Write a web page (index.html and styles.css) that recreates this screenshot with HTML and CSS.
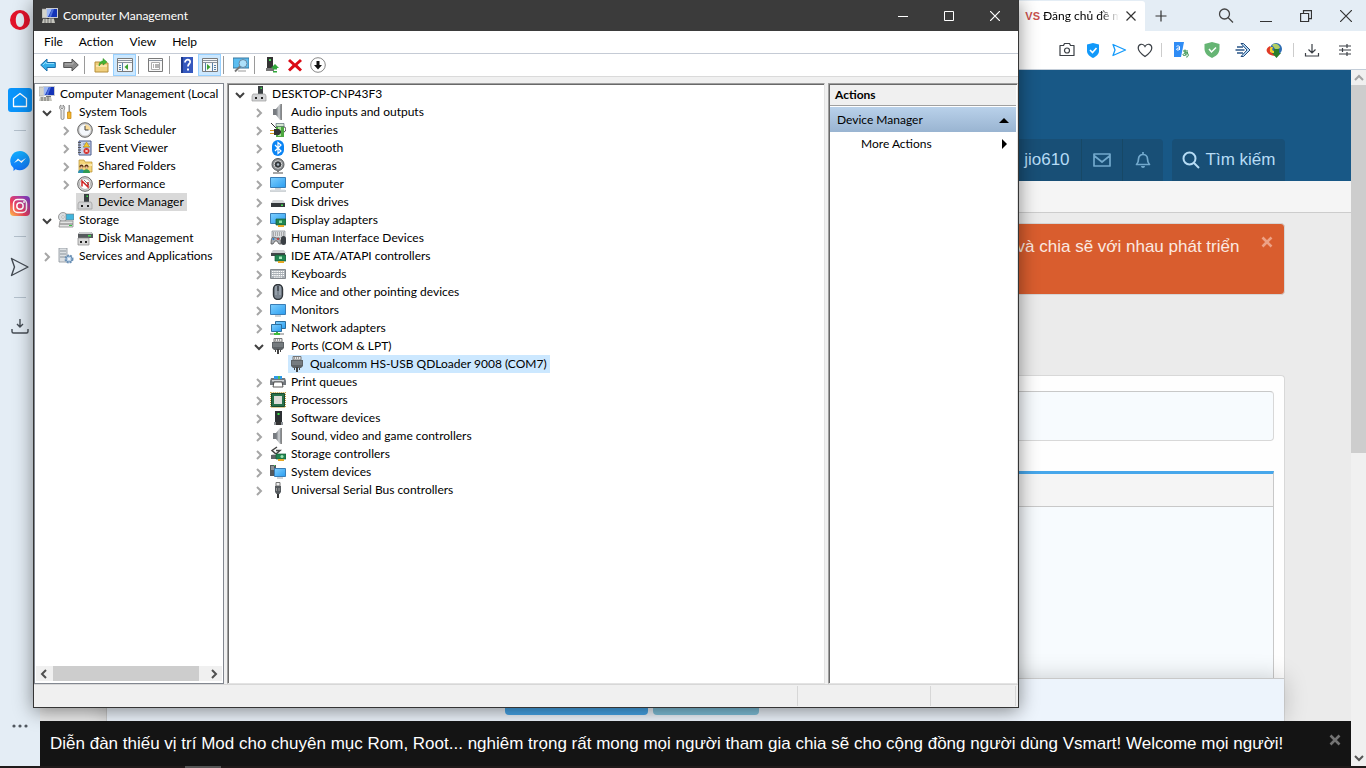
FILE: index.html
```html
<!DOCTYPE html>
<html lang="vi">
<head>
<meta charset="utf-8">
<title>Computer Management</title>
<link rel="stylesheet" href="styles.css">
</head>
<body>
<svg class="defs" aria-hidden="true">
  <defs>
    <linearGradient id="g-screen" x1="0" y1="0" x2="1" y2="1"><stop offset="0" stop-color="#7fd0ff"/><stop offset="1" stop-color="#2a9df0"/></linearGradient>
    <linearGradient id="g-metal" x1="0" y1="0" x2="1" y2="0"><stop offset="0" stop-color="#70757a"/><stop offset=".5" stop-color="#d0d3d6"/><stop offset="1" stop-color="#777"/></linearGradient>
    <linearGradient id="g-insta" x1="0" y1="1" x2="1" y2="0"><stop offset="0" stop-color="#fdc24c"/><stop offset=".4" stop-color="#ee3e5c"/><stop offset="1" stop-color="#7b3fe0"/></linearGradient>
    <linearGradient id="g-msg" x1="0" y1="0" x2="0" y2="1"><stop offset="0" stop-color="#12b0ff"/><stop offset="1" stop-color="#1272fa"/></linearGradient>
  </defs>
  <symbol id="chev-down" viewBox="0 0 10 10"><path d="M1 3l4 4 4-4" fill="none" stroke="#404040" stroke-width="2"/></symbol>
  <symbol id="chev-right" viewBox="0 0 10 10"><path d="M3 1l4 4-4 4" fill="none" stroke="#a6a6a6" stroke-width="2"/></symbol>
  <symbol id="i-mgmt" viewBox="0 0 16 16"><path d="M0 1h5v9H0z" fill="#d4d4cc" stroke="#999" stroke-width=".6"/><path d="M4 0h12v10H4z" fill="#c9ccd2"/><path d="M5 1h10v8H5z" fill="#1434b8"/><path d="M5 1h5L6 9H5z" fill="#9db8f4"/><path d="M10 1h2L9 9H7z" fill="#4e70dc"/><path d="M7 10h5v1H7z" fill="#777"/><path d="M1 11h11l1 4H0z" fill="#c5c5bd"/><path d="M2 12h9M2 14h9" stroke="#6f6f6f" stroke-dasharray="2 1"/></symbol>
  <symbol id="i-tools" viewBox="0 0 16 16"><path d="M3 1v3l1 1 1-1V1c2 1 2 4 1 5v8a1.500 1.500 0 01-3 0V6C1 5 1 2 3 1z" fill="#e8e8e8" stroke="#777" stroke-width=".8"/><path d="M10.500 1h1.500v7h-1.500z" fill="#999"/><path d="M9.500 8h3.500v6.500h-3.500z" fill="#f3b62c" stroke="#c27e0a" stroke-width=".7"/></symbol>
  <symbol id="i-clock" viewBox="0 0 16 16"><circle cx="8" cy="8" r="7.300" fill="#c9c9c9" stroke="#666"/><circle cx="8" cy="8" r="5.600" fill="#f5f8fc"/><path d="M8 2.400A5.600 5.600 0 0113.600 8H8z" fill="#f9dc9b"/><path d="M8 4v4h3.500" fill="none" stroke="#444"/></symbol>
  <symbol id="i-event" viewBox="0 0 16 16"><path d="M2 1h12v14H2z" fill="#c8d4ec" stroke="#4a5a8c"/><path d="M1 2.500h3M1 5h3M1 7.500h3M1 10h3M1 12.500h3" stroke="#555"/><path d="M6 4h7M6 7h7" stroke="#7487b8"/><path d="M9.500 2l3 5h-6z" fill="#f5c830" stroke="#a88000" stroke-width=".5"/><circle cx="9.500" cy="11" r="3" fill="#d5302c"/><path d="M8.300 9.800l2.400 2.400m0-2.400l-2.400 2.400" stroke="#fff"/></symbol>
  <symbol id="i-shared" viewBox="0 0 16 16"><path d="M2 2h5l1 2h7v10H2z" fill="#f4d57a" stroke="#b88f2c" stroke-width=".7"/><path d="M3 6h12v2H3z" fill="#fae7a8"/><circle cx="4.500" cy="8.500" r="2" fill="#5a3318"/><circle cx="9.500" cy="8.500" r="2" fill="#5a3318"/><circle cx="4.500" cy="9.500" r="1.200" fill="#f1c09b"/><circle cx="9.500" cy="9.500" r="1.200" fill="#f1c09b"/><path d="M1 15c0-5 7-5 7 0z" fill="#2d8fae"/><path d="M6 15c0-5 7-5 7 0z" fill="#2f9b50"/></symbol>
  <symbol id="i-perf" viewBox="0 0 16 16"><circle cx="8" cy="8" r="7.300" fill="#ddd" stroke="#666"/><circle cx="8" cy="8" r="5.400" fill="#fff" stroke="#8a8a8a" stroke-width=".6"/><path d="M5 10.500V5l6 6V6" fill="none" stroke="#d02222" stroke-width="1.500"/><path d="M7 4l5 5" stroke="#444" stroke-width=".7"/></symbol>
  <symbol id="i-device" viewBox="0 0 16 16"><path d="M7 0h5v8H7z" fill="#3a3f42"/><path d="M9.500 1.500h1.500V3H9.500z" fill="#3fe04a"/><path d="M2 8h12l1 2v5H1v-5z" fill="#d2d3d5" stroke="#9b9b9b" stroke-width=".7"/><path d="M4 11h2v2H4zM10 11h2v2h-2z" fill="#222"/></symbol>
  <symbol id="i-storage" viewBox="0 0 16 16"><circle cx="5" cy="5" r="4.500" fill="#d9dde0" stroke="#777" stroke-width=".7"/><circle cx="5" cy="5" r="1.300" fill="#fff" stroke="#888" stroke-width=".5"/><path d="M8 2h8v6H8z" fill="#42b5dd" stroke="#777" stroke-width=".6"/><path d="M2 9h13v6H1z" fill="#e3e3e3" stroke="#888" stroke-width=".8"/><path d="M2 12h13" stroke="#777"/><path d="M11 13h3v1h-3z" fill="#35c744"/></symbol>
  <symbol id="i-disk" viewBox="0 0 16 16"><path d="M3 2h11l2 2v4H1V4z" fill="#565a5d"/><path d="M3 2h11l2 2H1z" fill="#cacccd"/><path d="M11 5h3v1.500h-3z" fill="#45dd52"/><path d="M1 8h11v7H1z" fill="#d8d8d8" stroke="#888" stroke-width=".7"/><path d="M3 11h2v2H3zM8 11h2v2H8z" fill="#222"/></symbol>
  <symbol id="i-services" viewBox="0 0 16 16"><path d="M1 0h8v14H1z" fill="#dce0e3" stroke="#8a9299" stroke-width=".8"/><path d="M2 3h6M2 6h6M2 9h6" stroke="#8b949b"/><circle cx="11" cy="11" r="3.300" fill="#c8dcee" stroke="#6b90b5" stroke-width="2.400" stroke-dasharray="1.700 1"/><circle cx="11" cy="11" r="3" fill="#bcd4ea" stroke="#6b90b5"/><circle cx="11" cy="11" r="1" fill="#fff"/></symbol>
  <symbol id="i-speaker" viewBox="0 0 16 16"><path d="M3 5h3v6H3z" fill="#777b80"/><path d="M6 5l4-5h2v16h-2l-4-5z" fill="url(#g-metal)"/><path d="M10.500 1.500v13" stroke="#8d9297"/></symbol>
  <symbol id="i-battery" viewBox="0 0 16 16"><path d="M6 2h8v13H6z" fill="#4ca73f"/><path d="M6 1.500h8v3H6z" fill="#d3e8d0" stroke="#456" stroke-width=".6"/><path d="M8 5h3v9H8z" fill="#a9e69a"/><path d="M14 5c2.500 0 2.500 4 0 5M1 1l3 3 2 2" fill="none" stroke="#333"/><path d="M4 7h5l2 2v2l-2 2H4z" fill="#333"/><path d="M0 8.500h4M0 11.500h4" stroke="#d99a1c"/></symbol>
  <symbol id="i-bt" viewBox="0 0 16 16"><rect x="2" y="0" width="12" height="16" rx="6" fill="#0a84f4"/><path d="M5 5l6 6-3 2.500v-11L11 5l-6 6" fill="none" stroke="#fff" stroke-width="1.200"/></symbol>
  <symbol id="i-camera" viewBox="0 0 16 16"><circle cx="8" cy="6.500" r="6" fill="#8d9194" stroke="#55585b"/><circle cx="8" cy="6.500" r="3.800" fill="#33373a" stroke="#d7d7d7"/><circle cx="8" cy="6.500" r="1.300" fill="#a9b8c4"/><path d="M7 12h2v2H7z" fill="#777"/><path d="M3 15h10" stroke="#888" stroke-width="1.500"/></symbol>
  <symbol id="i-computer" viewBox="0 0 16 16"><path d="M.5 1.500h15v10H.5z" fill="url(#g-screen)" stroke="#3a7db5"/><path d="M5 13h6M0 15h16" stroke="#a0a9b0"/><path d="M1 14h14" stroke="#dce2e6"/></symbol>
  <symbol id="i-drive" viewBox="0 0 16 16"><path d="M3 6h10l2 3H1z" fill="#d4d6d8"/><path d="M1 9h14v4H1z" fill="#34383b"/><path d="M11 10.500h2V12h-2z" fill="#44e052"/></symbol>
  <symbol id="i-display" viewBox="0 0 16 16"><path d="M.5 1.500h15v10H.5z" fill="url(#g-screen)" stroke="#3a7db5"/><path d="M6 7h10v6H6z" fill="#228652" stroke="#145a35" stroke-width=".7"/><path d="M9 8.500h3V11H9z" fill="#8adfa5"/><path d="M8 13h6v2H8z" fill="#e6a826"/></symbol>
  <symbol id="i-hid" viewBox="0 0 16 16"><path d="M2 1h13v7H2z" fill="#dadde0" stroke="#858a90" stroke-width=".7"/><path d="M3 3h11M3 5h11" stroke="#777" stroke-dasharray="1 1"/><path d="M1 14c0-9 3-7 5-6s4-3 5 6H9l-2-3H5l-2 3z" fill="#a8adb3" stroke="#555" stroke-width=".8"/><circle cx="3.500" cy="9" r="1" fill="#2878c8"/><circle cx="8" cy="9" r="1" fill="#c33"/><rect x="11" y="6" width="5" height="9" rx="2.500" fill="#3b4045"/></symbol>
  <symbol id="i-ide" viewBox="0 0 16 16"><path d="M3 2h11l2 3H1z" fill="#cfd1d3"/><path d="M1 5h14v3H1z" fill="#44484b"/><path d="M5 7h11v6H5z" fill="#228652" stroke="#145a35" stroke-width=".7"/><path d="M9 8.500h3V11H9z" fill="#a5e8b9"/><path d="M8 13h6v2H8z" fill="#e6a826"/></symbol>
  <symbol id="i-keyboard" viewBox="0 0 16 16"><path d="M.5 3.500h15v9H.5z" fill="#aab0b6" stroke="#858a90"/><path d="M2 5.500h12M2 7.500h12M2 9.500h12M4 11.200h8" stroke="#fff" stroke-dasharray="1.500 .7"/></symbol>
  <symbol id="i-mouse" viewBox="0 0 16 16"><rect x="3.500" y=".5" width="9" height="15" rx="4.500" fill="#7b8590" stroke="#30353a" stroke-width="1.400"/><path d="M6 2v9M10 2v9" stroke="#aeb7c0"/><path d="M7.500 2h1v5h-1z" fill="#20252a"/></symbol>
  <symbol id="i-monitor" viewBox="0 0 16 16"><path d="M.5 2.500h15v10H.5z" fill="url(#g-screen)" stroke="#3a7db5"/><path d="M5 14h6" stroke="#a0a9b0"/></symbol>
  <symbol id="i-network" viewBox="0 0 16 16"><path d="M5.500 1.500h10v7h-10z" fill="url(#g-screen)" stroke="#2d6f9e"/><path d="M1.500 4.500h10v7h-10z" fill="url(#g-screen)" stroke="#2d6f9e"/><path d="M0 14h14" stroke="#bbb" stroke-width="2"/><path d="M6 12h2v1h2v2H4v-2h2z" fill="#3fbb3c"/></symbol>
  <symbol id="i-port" viewBox="0 0 16 16"><path d="M4 .5h8V4H4z" fill="#e8e8e8" stroke="#777"/><path d="M5 2h6" stroke="#555" stroke-dasharray="1 1"/><path d="M2 4h12v6l-2 2H4L2 10z" fill="#5d6266"/><path d="M3 6h10M3 8h10" stroke="#8e9397"/><path d="M5 12h1v2H5zM7 11h2v5H7zM10 12h1v2h-1z" fill="#444"/></symbol>
  <symbol id="i-printer" viewBox="0 0 16 16"><path d="M1 4h14l1 3v4H0V7z" fill="#73787d"/><path d="M4 2h8v3H4z" fill="#2d9ae8"/><path d="M8 2h2v3H8z" fill="#49c157"/><path d="M2 6h12v1.500H2z" fill="#d2d5d8"/><path d="M4 8h8l1 5H3z" fill="#fff" stroke="#333" stroke-width=".8"/></symbol>
  <symbol id="i-cpu" viewBox="0 0 16 16"><path d="M.7.700h14.600v14.600H.700z" fill="none" stroke="#c49a35" stroke-width="1.300" stroke-dasharray="1 1"/><path d="M1.500 1.500h13v13h-13z" fill="#28704a" stroke="#17482f"/><path d="M4 4h8v8H4z" fill="#dcdcd8"/></symbol>
  <symbol id="i-soft" viewBox="0 0 16 16"><path d="M5 1h7v11H5z" fill="#2c3033"/><path d="M7.500 3h2v2h-2z" fill="#3fe04a"/><path d="M4 12h9v3H4z" fill="#90959a"/><path d="M6 12h5v3H6z" fill="#333"/></symbol>
  <symbol id="i-storctl" viewBox="0 0 16 16"><path d="M7 1L2 4.500 6 8l4-3.500H6" fill="none" stroke="#444" stroke-width="1.500"/><path d="M1 9h12v4H1z" fill="#606468"/><path d="M1 9h12l-2-1H3z" fill="#c6c9cc"/><path d="M6 8h10v5H6z" fill="#228652" stroke="#145a35" stroke-width=".7"/><circle cx="12" cy="10.500" r="1.500" fill="#9fe6b5"/><path d="M8 13h6v2H8z" fill="#e6a826"/></symbol>
  <symbol id="i-system" viewBox="0 0 16 16"><path d="M0 1h6v11H0z" fill="#53585c"/><path d="M1 3h3M1 5h3" stroke="#c8ccd0"/><path d="M4 1h1v1H4z" fill="#4be05a"/><path d="M4.500 4.500h11v8h-11z" fill="url(#g-screen)" stroke="#3a7db5"/><path d="M7 14h6" stroke="#a0a9b0"/></symbol>
  <symbol id="i-usb" viewBox="0 0 16 16"><path d="M6 .5h4V4H6z" fill="#eee" stroke="#777"/><path d="M5 4h6v6l-1.500 2h-3L5 10z" fill="#555a5e"/><path d="M6.500 6v3M9 6v3" stroke="#999"/><path d="M7 12h2v4H7z" fill="#333"/></symbol>
</svg>

<main class="browser">
  <aside class="rail">
    <svg class="rail-opera" viewBox="0 0 20 20"><path fill-rule="evenodd" d="M10 0a10 10 0 100 20 10 10 0 000-20zm0 3c2.600 0 4.200 3.200 4.200 7s-1.600 7-4.200 7-4.200-3.200-4.200-7S7.400 3 10 3z" fill="#e3132b"/></svg>
    <button class="rail-home" aria-label="Home"><svg viewBox="0 0 16 16"><path d="M8 1.500l6.500 5V14.500h-13v-8z" fill="none" stroke="#fff" stroke-width="1.300" stroke-linejoin="round"/></svg></button>
    <hr>
    <svg class="rail-icon msg" viewBox="0 0 20 20"><path d="M10 0a10 9.600 0 11-4.500 18.300L3.500 20v-3A9.800 9.800 0 0110 0z" fill="url(#g-msg)"/><path d="M4 12l4-4.500 3 2.500 5-3-4.500 5-3-2.500z" fill="#fff"/></svg>
    <svg class="rail-icon insta" viewBox="0 0 20 20"><rect width="20" height="20" rx="4" fill="url(#g-insta)"/><g fill="none" stroke="#fff" stroke-width="1.500"><rect x="3.500" y="3.500" width="13" height="13" rx="4"/><circle cx="10" cy="10" r="3.200"/></g><circle cx="14" cy="6" r="1" fill="#fff"/></svg>
    <hr>
    <svg class="rail-icon send" viewBox="0 0 20 20"><path d="M1.500 1.500L18 10 1.500 18.500 4.500 10z" fill="none" stroke="#454c54" stroke-width="1.400" stroke-linejoin="round"/></svg>
    <hr>
    <svg class="rail-icon" viewBox="0 0 20 20"><path d="M10 1v8M7 6l3 3 3-3M2 11v2.500c0 1 .5 1.500 1.500 1.500h13c1 0 1.500-.5 1.500-1.500V11" fill="none" stroke="#454c54" stroke-width="1.400"/></svg>
    <button class="rail-more" aria-label="More"><svg viewBox="0 0 16 4"><g fill="#50575f"><circle cx="2" cy="2" r="1.600"/><circle cx="8" cy="2" r="1.600"/><circle cx="14" cy="2" r="1.600"/></g></svg></button>
  </aside>

  <section class="view">
    <header class="tabs">
      <div class="tab"><b class="tab-mark">VS</b><span class="tab-name">Đăng chủ đề m</span>
        <button aria-label="Close tab"><svg class="s12" viewBox="0 0 12 12"><path d="M1.500 1.500l9 9M10.500 1.500l-9 9" stroke="#333" stroke-width="1.200"/></svg></button></div>
      <button class="tab-new" aria-label="New tab"><svg class="s12" viewBox="0 0 12 12"><path d="M6 .5v11M.5 6h11" stroke="#333" stroke-width="1.200"/></svg></button>
      <div class="chrome">
        <button aria-label="Search tabs"><svg class="s16" viewBox="0 0 16 16"><circle cx="6.500" cy="6" r="5" fill="none" stroke="#444" stroke-width="1.300"/><path d="M10 9.500l5 5" stroke="#444" stroke-width="1.300"/></svg></button>
        <button aria-label="Minimize browser"><svg class="s12" viewBox="0 0 12 12"><path d="M0 11.500h12" stroke="#333"/></svg></button>
        <button aria-label="Restore browser"><svg class="s12" viewBox="0 0 12 12"><path d="M.6 3.500h8v8h-8zM3.500 3.500V.6h8v8H8.600" fill="none" stroke="#333" stroke-width="1.200"/></svg></button>
        <button aria-label="Close browser"><svg class="s12" viewBox="0 0 12 12"><path d="M0 0l12 12M12 0L0 12" stroke="#333" stroke-width="1.200"/></svg></button>
      </div>
    </header>
    <nav class="address">
      <svg class="s16" viewBox="0 0 16 16"><path d="M1 3.500h3.500l1-2h5l1 2H15v10H1z" fill="none" stroke="#3a3f45" stroke-width="1.200" stroke-linejoin="round"/><circle cx="8" cy="8.500" r="2.500" fill="none" stroke="#3a3f45" stroke-width="1.200"/></svg>
      <svg class="s16" viewBox="0 0 16 16"><path d="M8 1l6 1.500V9c0 3.500-3 5.500-6 7-3-1.500-6-3.500-6-7V2.500z" fill="#1299fa"/><path d="M5 8l2.500 2.500L11.500 6" fill="none" stroke="#fff" stroke-width="1.600"/></svg>
      <svg class="s16" viewBox="0 0 16 16"><path d="M2 2.500L14.500 8 2 13.500 4 8z" fill="none" stroke="#1299fa" stroke-width="1.300" stroke-linejoin="round"/></svg>
      <svg class="s16 heart" viewBox="0 0 16 16"><path d="M8 14.500C3 11 1.200 8.500 1.200 6 1.200 2 6 .8 8 4.500 10 .8 14.800 2 14.800 6c0 2.500-1.800 5-6.800 8.500z" fill="none" stroke="#3a3f45" stroke-width="1.200"/></svg>
      <i></i>
      <svg class="s16 ext" viewBox="0 0 16 16"><path d="M1 0h10L8 15H1z" fill="#2f8cf5"/><path d="M6.500 8V4.500c-1-1-3-.5-3 0M6.500 6c-3-.5-4 2.500-1.500 2 1 0 1.500-1 1.500-2" fill="none" stroke="#fff"/><path d="M10 9h5M12 7.500c0 4 0 5 1 6M14.500 10c-1 4-4 4-4.500 3s4-4 5-1-1.500 3-2 3" fill="none" stroke="#2c8d45"/></svg>
      <svg class="s16 ext" viewBox="0 0 16 16"><path d="M8 0l7.500 2v5c0 4.500-4 7.500-7.500 9C4.500 14.500.5 11.500.5 7V2z" fill="#66b574"/><path d="M5 7l2.500 3L12 5.500" fill="none" stroke="#fff" stroke-width="1.500"/></svg>
      <svg class="s16 ext" viewBox="0 0 16 16"><path d="M6 1.500h2.500L15 8l-6.500 6.500H6L12 8z" fill="#b5d9f6" stroke="#21497a"/><path d="M2 5h6M.5 8h9M2 11h6" stroke="#2b5789" stroke-width="1.300"/></svg>
      <svg class="s16 ext" viewBox="0 0 16 16"><circle cx="10" cy="7" r="6" fill="#2d6cb3"/><path d="M6 3c3-3 8 0 8 3l-4 2z" fill="#b2cf64"/><path d="M4 4C-2 7 0 13 9 14l-1-3C4 11 3 9 5 6z" fill="#e03a26"/><path d="M5 5c-3 3 0 7 4 6L8 9C6 9 6 7 7 5z" fill="#f5d228"/><path d="M8 7h5v4h2l-4.500 5L6 11h2z" fill="#2a7e2b"/></svg>
      <i></i>
      <svg class="s16 download" viewBox="0 0 16 16"><path d="M8 2v9M4.500 7.500L8 11l3.500-3.500M1.500 11v3h13v-3" fill="none" stroke="#3a3f45" stroke-width="1.200"/></svg>
      <svg class="s16 setup" viewBox="0 0 16 16"><path d="M2 4h12M2 8h12M2 12h12M10 2v4M5.500 6v4M10 10v4" stroke="#3a3f45" stroke-width="1.200"/></svg>
    </nav>
    <div class="viewport">
      <div class="site">
        <header class="site-head"><div class="wrap site-tools">
          <div class="account"><a href="#">jio610</a>
            <a href="#" aria-label="Inbox"><svg class="s18" viewBox="0 0 18 18"><path d="M1 3h16v12H1zM1.500 5l7.500 6 7.500-6" fill="none" stroke="#72a9cd" stroke-width="1.700" stroke-linejoin="round"/></svg></a>
            <a href="#" aria-label="Alerts"><svg class="s18" viewBox="0 0 18 18"><path d="M2.500 13.500c2-2 2-3 2-5.500 0-6 9-6 9 0 0 2.500 0 3.500 2 5.500zM9 3.500V1" fill="none" stroke="#72a9cd" stroke-width="1.700" stroke-linejoin="round"/><path d="M7 15h4c0 2.500-4 2.500-4 0z" fill="#72a9cd"/></svg></a></div>
          <a class="search" href="#"><svg class="s18" viewBox="0 0 18 18"><circle cx="7.500" cy="7.500" r="6" fill="none" stroke="#b6dcf5" stroke-width="2"/><path d="M12 12l5 5" stroke="#b6dcf5" stroke-width="2"/></svg>Tìm kiếm</a>
        </div></header>
        <div class="subnav"></div>
        <div class="wrap body">
          <div class="alert"><p>và chia sẽ với nhau phát triển</p><button aria-label="Dismiss"><svg class="s12" viewBox="0 0 12 12"><path d="M1.500 1.500l9 9M10.500 1.500l-9 9" stroke="#eda286" stroke-width="2.600"/></svg></button></div>
          <form class="composer">
            <input type="text" aria-label="Title">
            <div class="editor"><div class="editor-bar"></div><textarea aria-label="Message"></textarea></div>
            <footer class="submit"><button type="button" class="post" aria-label="Post"></button><button type="button" class="preview" aria-label="Preview"></button></footer>
          </form>
        </div>
        <div class="notice"><p>Diễn đàn thiếu vị trí Mod cho chuyên mục Rom, Root... nghiêm trọng rất mong mọi người tham gia chia sẽ cho cộng đồng người dùng Vsmart! Welcome mọi người!</p><button aria-label="Close notice"><svg class="s12" viewBox="0 0 12 12"><path d="M1.500 1.500l9 9M10.500 1.500l-9 9" stroke="#737373" stroke-width="2.600"/></svg></button></div>
      </div>
      <div class="scroll">
        <svg viewBox="0 0 10 10"><path d="M1 7l4-4 4 4" fill="none" stroke="#a3a3a3" stroke-width="2"/></svg>
        <div class="scroll-thumb"></div>
        <svg viewBox="0 0 10 10"><path d="M1 3l4 4 4-4" fill="none" stroke="#555" stroke-width="2"/></svg>
      </div>
    </div>
  </section>
  <div class="taskbar"><i></i></div>
</main>

<section class="window">
  <header class="title"><svg class="s16"><use href="#i-mgmt"/></svg><h1>Computer Management</h1>
    <button aria-label="Minimize"><svg class="s10" viewBox="0 0 10 10"><path d="M0 5.500h10" stroke="#fff"/></svg></button>
    <button aria-label="Maximize"><svg class="s10" viewBox="0 0 10 10"><path d="M.5.500h9v9h-9z" fill="none" stroke="#fff"/></svg></button>
    <button aria-label="Close"><svg class="s10" viewBox="0 0 10 10"><path d="M0 0l10 10M10 0L0 10" stroke="#fff" stroke-width="1.200"/></svg></button>
  </header>
  <nav class="menu"><button>File</button><button>Action</button><button>View</button><button>Help</button></nav>
  <div class="tools">
    <button aria-label="Back"><svg class="s16" viewBox="0 0 16 16"><path d="M.7 8L7 2v3.500h8.300v5H7V14z" fill="#35aee8" stroke="#1b6da8"/><path d="M3 8l3-3v1.500h8" fill="none" stroke="#8fdcfa"/></svg></button>
    <button aria-label="Forward"><svg class="s16" viewBox="0 0 16 16"><path d="M15.300 8L9 2v3.500H.7v5H9V14z" fill="#8b8b8b" stroke="#555"/><path d="M2 7h8V5" fill="none" stroke="#b5b5b5"/></svg></button>
    <hr>
    <button aria-label="Up one level"><svg class="s16" viewBox="0 0 16 16"><path d="M1 5h5l1 1h7v9H1z" fill="#f0cf7d" stroke="#b68e3b"/><path d="M2 8h11v2H2z" fill="#fae5ab"/><path d="M5 9c0-4 2-5 4-5V1.500L13 5 9 8V6c-2 0-2 1-4 3z" fill="#45b735" stroke="#28841e" stroke-width=".5"/></svg></button>
    <button class="on" aria-label="Console tree"><svg class="s16" viewBox="0 0 16 16"><path d="M.5 1.500h15v13H.5z" fill="#f7f7f7" stroke="#7a7a7a"/><path d="M1 3.500h14M1 5.500h14" stroke="#8a929d"/><path d="M5.500 6v8M2 8.500h2M2 10.500h2M2 12.500h2" stroke="#557faa"/><path d="M11 7v6l-3.500-3z" fill="#3aa02f"/></svg></button>
    <hr>
    <button aria-label="Properties"><svg class="s16" viewBox="0 0 16 16"><path d="M.5 1.500h14v13H.5z" fill="#f7f7f7" stroke="#7a7a7a"/><path d="M1 3.500h13" stroke="#8a929d"/><path d="M3.500 5.500h8v7h-8z" fill="#fff" stroke="#aaa"/><path d="M5 8h1M7 8h4M5 10h1M7 10h4" stroke="#666"/></svg></button>
    <hr>
    <button aria-label="Help"><svg class="s16" viewBox="0 0 16 16"><path d="M2 0h12v16H2z" fill="#3558be"/><path d="M2 0h2v16H2z" fill="#1e3a8c"/><path d="M6 5.500c0-4 6-3.500 5 0-.5 1.500-2 1.500-2 4" fill="none" stroke="#fff" stroke-width="1.800"/><path d="M8 11.500h2v2H8z" fill="#fff"/></svg></button>
    <button class="on" aria-label="Action pane"><svg class="s16" viewBox="0 0 16 16"><path d="M.5 1.500h15v13H.5z" fill="#f7f7f7" stroke="#7a7a7a"/><path d="M1 3.500h14M1 5.500h14" stroke="#8a929d"/><path d="M3.500 6v8M10.500 6v8M12 8.500h2M12 10.500h2M12 12.500h2" stroke="#557faa"/><path d="M5 7v6l3.500-3z" fill="#3aa02f"/></svg></button>
    <hr>
    <button aria-label="Scan hardware"><svg class="s16" viewBox="0 0 16 16"><path d="M0 1h16v10H0z" fill="#5bbdf0" stroke="#38779e"/><path d="M5 14h8" stroke="#999"/><circle cx="10" cy="6.500" r="4" fill="#ade0fa" stroke="#6686a0"/><path d="M7 9.500l-5 5" stroke="#777" stroke-width="1.800"/></svg></button>
    <hr>
    <button aria-label="Update driver"><svg class="s16" viewBox="0 0 16 16"><path d="M3 0h6v11H3z" fill="#333"/><path d="M5 2h2v2H5z" fill="#4be05a"/><path d="M2 11h8v3H2z" fill="#777"/><path d="M11 7l4 4h-2v1.500H9V11H7zM9 14h4v1.500H9z" fill="#31a93b"/></svg></button>
    <button aria-label="Uninstall"><svg class="s16" viewBox="0 0 16 16"><path d="M3 2l5 4.500L13 2l2 2-4.500 4 4.500 4.500-2 2L8 10l-5 4.500-2-2L5.500 8 1 4z" fill="#db0a14"/></svg></button>
    <button aria-label="Disable"><svg class="s16" viewBox="0 0 16 16"><circle cx="8" cy="8" r="7.300" fill="#fff" stroke="#888"/><path d="M6.500 4h3v4H12l-4 4.500L4 8h2.500z" fill="#111"/></svg></button>
  </div>

  <div class="panes">
    <aside class="pane tree-pane">
      <div class="tree">
        <div class="row"><span class="item"><svg class="s16"><use href="#i-mgmt"/></svg>Computer Management (Local</span></div>
        <ul class="flat">
          <li><div class="row"><button aria-label="Collapse"><svg class="s10"><use href="#chev-down"/></svg></button><span class="item"><svg class="s16"><use href="#i-tools"/></svg>System Tools</span></div>
            <ul>
              <li class="row"><button aria-label="Expand"><svg class="s10"><use href="#chev-right"/></svg></button><span class="item"><svg class="s16"><use href="#i-clock"/></svg>Task Scheduler</span></li>
              <li class="row"><button aria-label="Expand"><svg class="s10"><use href="#chev-right"/></svg></button><span class="item"><svg class="s16"><use href="#i-event"/></svg>Event Viewer</span></li>
              <li class="row"><button aria-label="Expand"><svg class="s10"><use href="#chev-right"/></svg></button><span class="item"><svg class="s16"><use href="#i-shared"/></svg>Shared Folders</span></li>
              <li class="row"><button aria-label="Expand"><svg class="s10"><use href="#chev-right"/></svg></button><span class="item"><svg class="s16"><use href="#i-perf"/></svg>Performance</span></li>
              <li class="row leaf"><span class="item picked"><svg class="s16"><use href="#i-device"/></svg>Device Manager</span></li>
            </ul></li>
          <li><div class="row"><button aria-label="Collapse"><svg class="s10"><use href="#chev-down"/></svg></button><span class="item"><svg class="s16"><use href="#i-storage"/></svg>Storage</span></div>
            <ul><li class="row leaf"><span class="item"><svg class="s16"><use href="#i-disk"/></svg>Disk Management</span></li></ul></li>
          <li class="row"><button aria-label="Expand"><svg class="s10"><use href="#chev-right"/></svg></button><span class="item"><svg class="s16"><use href="#i-services"/></svg>Services and Applications</span></li>
        </ul>
      </div>
      <div class="hscroll">
        <svg class="s10" viewBox="0 0 10 10"><path d="M7 1L3 5l4 4" fill="none" stroke="#505050" stroke-width="2"/></svg>
        <div class="hscroll-track"><div class="hscroll-thumb"></div></div>
        <svg class="s10" viewBox="0 0 10 10"><path d="M3 1l4 4-4 4" fill="none" stroke="#505050" stroke-width="2"/></svg>
      </div>
    </aside>

    <section class="pane sunken devices">
      <div class="tree">
        <div class="row"><button aria-label="Collapse"><svg class="s10"><use href="#chev-down"/></svg></button><span class="item"><svg class="s16"><use href="#i-device"/></svg>DESKTOP-CNP43F3</span></div>
        <ul>
          <li class="row"><button aria-label="Expand"><svg class="s10"><use href="#chev-right"/></svg></button><span class="item"><svg class="s16"><use href="#i-speaker"/></svg>Audio inputs and outputs</span></li>
          <li class="row"><button aria-label="Expand"><svg class="s10"><use href="#chev-right"/></svg></button><span class="item"><svg class="s16"><use href="#i-battery"/></svg>Batteries</span></li>
          <li class="row"><button aria-label="Expand"><svg class="s10"><use href="#chev-right"/></svg></button><span class="item"><svg class="s16"><use href="#i-bt"/></svg>Bluetooth</span></li>
          <li class="row"><button aria-label="Expand"><svg class="s10"><use href="#chev-right"/></svg></button><span class="item"><svg class="s16"><use href="#i-camera"/></svg>Cameras</span></li>
          <li class="row"><button aria-label="Expand"><svg class="s10"><use href="#chev-right"/></svg></button><span class="item"><svg class="s16"><use href="#i-computer"/></svg>Computer</span></li>
          <li class="row"><button aria-label="Expand"><svg class="s10"><use href="#chev-right"/></svg></button><span class="item"><svg class="s16"><use href="#i-drive"/></svg>Disk drives</span></li>
          <li class="row"><button aria-label="Expand"><svg class="s10"><use href="#chev-right"/></svg></button><span class="item"><svg class="s16"><use href="#i-display"/></svg>Display adapters</span></li>
          <li class="row"><button aria-label="Expand"><svg class="s10"><use href="#chev-right"/></svg></button><span class="item"><svg class="s16"><use href="#i-hid"/></svg>Human Interface Devices</span></li>
          <li class="row"><button aria-label="Expand"><svg class="s10"><use href="#chev-right"/></svg></button><span class="item"><svg class="s16"><use href="#i-ide"/></svg>IDE ATA/ATAPI controllers</span></li>
          <li class="row"><button aria-label="Expand"><svg class="s10"><use href="#chev-right"/></svg></button><span class="item"><svg class="s16"><use href="#i-keyboard"/></svg>Keyboards</span></li>
          <li class="row"><button aria-label="Expand"><svg class="s10"><use href="#chev-right"/></svg></button><span class="item"><svg class="s16"><use href="#i-mouse"/></svg>Mice and other pointing devices</span></li>
          <li class="row"><button aria-label="Expand"><svg class="s10"><use href="#chev-right"/></svg></button><span class="item"><svg class="s16"><use href="#i-monitor"/></svg>Monitors</span></li>
          <li class="row"><button aria-label="Expand"><svg class="s10"><use href="#chev-right"/></svg></button><span class="item"><svg class="s16"><use href="#i-network"/></svg>Network adapters</span></li>
          <li><div class="row"><button aria-label="Collapse"><svg class="s10"><use href="#chev-down"/></svg></button><span class="item"><svg class="s16"><use href="#i-port"/></svg>Ports (COM &amp; LPT)</span></div>
            <ul><li class="row leaf"><span class="item focus"><svg class="s16"><use href="#i-port"/></svg>Qualcomm HS-USB QDLoader 9008 (COM7)</span></li></ul></li>
          <li class="row"><button aria-label="Expand"><svg class="s10"><use href="#chev-right"/></svg></button><span class="item"><svg class="s16"><use href="#i-printer"/></svg>Print queues</span></li>
          <li class="row"><button aria-label="Expand"><svg class="s10"><use href="#chev-right"/></svg></button><span class="item"><svg class="s16"><use href="#i-cpu"/></svg>Processors</span></li>
          <li class="row"><button aria-label="Expand"><svg class="s10"><use href="#chev-right"/></svg></button><span class="item"><svg class="s16"><use href="#i-soft"/></svg>Software devices</span></li>
          <li class="row"><button aria-label="Expand"><svg class="s10"><use href="#chev-right"/></svg></button><span class="item"><svg class="s16"><use href="#i-speaker"/></svg>Sound, video and game controllers</span></li>
          <li class="row"><button aria-label="Expand"><svg class="s10"><use href="#chev-right"/></svg></button><span class="item"><svg class="s16"><use href="#i-storctl"/></svg>Storage controllers</span></li>
          <li class="row"><button aria-label="Expand"><svg class="s10"><use href="#chev-right"/></svg></button><span class="item"><svg class="s16"><use href="#i-system"/></svg>System devices</span></li>
          <li class="row"><button aria-label="Expand"><svg class="s10"><use href="#chev-right"/></svg></button><span class="item"><svg class="s16"><use href="#i-usb"/></svg>Universal Serial Bus controllers</span></li>
        </ul>
      </div>
    </section>

    <aside class="pane sunken actions">
      <h2>Actions</h2>
      <button class="group">Device Manager<svg class="s10" viewBox="0 0 10 10"><path d="M0 8l5-5 5 5z" fill="#000"/></svg></button>
      <button class="more">More Actions<svg class="s10" viewBox="0 0 10 10"><path d="M3 0l5 5-5 5z" fill="#000"/></svg></button>
    </aside>
  </div>
  <footer class="status"><span></span><span></span><span></span></footer>
</section>
</body>
</html>
```
FILE: styles.css
```css
* { box-sizing: border-box; }
body { margin: 0; height: 100vh; overflow: hidden; position: relative; font: 12px/18px Lato, "Open Sans", sans-serif; color: #000; }
button { margin: 0; padding: 0; border: 0; background: none; font: inherit; color: inherit; display: flex; align-items: center; justify-content: center; }
ul, p, h1, h2 { margin: 0; padding: 0; list-style: none; font-size: inherit; font-weight: normal; }
svg { flex: none; display: block; }
a { color: inherit; text-decoration: none; }
.defs { position: absolute; width: 0; height: 0; }
.s10 { width: 10px; height: 10px; }
.s12 { width: 12px; height: 12px; }
.s16 { width: 16px; height: 16px; }
.s18 { width: 18px; height: 18px; }

/* Browser */
.browser { height: 100vh; display: grid; grid-template: 1fr 2px / 40px 1fr; background: #e4edf5; }
.taskbar { grid-column: 1 / -1; background: #1f1a1a; padding-left: 185px; }
.taskbar i { display: block; width: 36px; height: 2px; background: #555; }
.rail { display: flex; flex-direction: column; align-items: center; padding: 10px 0 32px; }
.rail hr { width: 12px; height: 1px; margin: 18px 0 20px; border: 0; background: #b4c1cd; flex: none; }
.rail-opera, .rail-icon { width: 20px; height: 20px; flex: none; }
.rail-home { width: 24px; height: 24px; margin-top: 58px; border-radius: 3px; background: #0a95fc; flex: none; }
.rail-home svg { width: 16px; height: 16px; }
.insta { margin: 25px 0 2px; }
.send { margin-bottom: 2px; }
.rail-more { margin-top: auto; width: 24px; height: 16px; }
.rail-more svg { width: 16px; height: 4px; }
.view { display: flex; flex-direction: column; min-width: 0; min-height: 0; }
.tabs { height: 31px; display: flex; justify-content: flex-end; align-items: stretch; flex: none; }
.tab { display: flex; align-items: center; margin-top: 1px; padding: 0 8px 0 200px; border-radius: 3px 3px 0 0; background: #fff; }
.tab-mark { font: bold 11px "Liberation Sans", sans-serif; color: #c9524f; }
.tab-name { width: 76px; margin: 0 6px 0 3px; white-space: nowrap; mask-image: linear-gradient(90deg, #000 75%, transparent); }
.tab-new { width: 31px; }
.chrome { display: flex; width: 190px; padding-left: 30px; }
.chrome button { width: 40px; }
.address { height: 39px; flex: none; display: flex; justify-content: flex-end; align-items: center; gap: 10px; padding-right: 13px; background: #fff; border-bottom: 1px solid #c3cdd8; }
.address i { width: 1px; height: 14px; background: #ccc; }
.address .heart { margin-right: -2px; }
.address .ext { margin: 0 1px; }
.address .ext + .ext { margin-left: 4px; }
.address .setup { margin-left: 7px; }
.viewport { flex: 1; min-height: 0; display: grid; grid-template-columns: 1fr 15px; }
.scroll { display: flex; flex-direction: column; align-items: center; padding: 3px 0; background: #f0f0f0; }
.scroll svg { width: 10px; height: 10px; }
.scroll-thumb { width: 15px; height: 368px; margin: 2px 0 auto; background: #cdcdcd; }

/* Forum page */
.site { display: flex; flex-direction: column; min-width: 0; min-height: 0; background: #ebebeb; font: 17px/24px "Liberation Sans", sans-serif; }
.wrap { width: 90%; max-width: 1181px; margin: 0 auto; }
.site-head { height: 111px; flex: none; display: flex; align-items: flex-end; background: #185886; color: #b6dcf5; }
.site-tools { display: flex; justify-content: flex-end; gap: 9px; height: 42px; }
.account, .search { display: flex; align-items: center; background: #184f76; border-radius: 4px 4px 0 0; }
.account a { display: flex; align-items: center; height: 42px; padding: 0 11px; border-right: 1px solid #174866; }
.account a:last-child { border: 0; }
.search { gap: 6px; padding: 0 10px; }
.subnav { height: 32px; flex: none; background: #f5f5f5; border-bottom: 1px solid #ccc; }
.body { flex: 1; min-height: 0; display: flex; flex-direction: column; padding-top: 10px; }
.alert { height: 72px; flex: none; display: flex; justify-content: flex-end; align-items: flex-start; gap: 20px; padding: 11px 9px; border: 1px solid #d5d5d5; border-radius: 4px; background: #d95d2e; color: #fbe9e1; }
.alert button, .notice button { width: 16px; height: 14px; flex: none; }
.composer { flex: 1; min-height: 0; margin-top: 80px; display: flex; flex-direction: column; border: 1px solid #d8d8d8; border-bottom: 0; border-radius: 4px 4px 0 0; background: #fefefe; }
.composer input { height: 50px; flex: none; margin: 15px 10px 30px; border: 1px solid #d8d8d8; border-top-color: #c8c8c8; border-radius: 4px; background: #f7fbfe; }
.editor { flex: 1; min-height: 0; display: flex; flex-direction: column; margin: 0 10px; border: 1px solid #c8c8c8; border-width: 0 1px; border-top: 3px solid #47a7eb; background: #f7fbfe; }
.editor-bar { height: 33px; flex: none; background: #f5f5f5; border-bottom: 1px solid #c8c8c8; }
.editor textarea { flex: 1; border: 0; resize: none; background: transparent; }
.submit { height: 43px; flex: none; display: flex; justify-content: center; align-items: flex-start; gap: 5px; padding-right: 127px; border-top: 1px solid #c8c8c8; background: #edf4fc; box-shadow: 0 0 24px rgba(0, 0, 0, .2); }
.submit button { height: 36px; border-radius: 4px; }
.post { width: 143px; background: #47a7eb; }
.preview { width: 106px; background: #80c2dc; }
.notice { height: 45px; flex: none; z-index: 1; display: flex; justify-content: space-between; align-items: center; padding: 0 8px 0 10px; background: #141414; color: #fefefe; white-space: nowrap; overflow: hidden; }
.notice button { margin-bottom: 8px; }

/* Management console */
.window { position: absolute; inset: 0 347px 60px 33px; display: flex; flex-direction: column; border: 1px solid #353535; border-top: 0; background: #f0f0f0; box-shadow: 0 3px 18px rgba(0, 0, 0, .45); white-space: nowrap; }
.title { height: 31px; flex: none; display: flex; align-items: center; padding-left: 8px; background: #3b3b3b; color: #fff; }
.title h1 { flex: 1; margin-left: 5px; }
.title button { width: 46px; height: 31px; }
.menu { height: 23px; flex: none; display: flex; padding-left: 2px; background: #fff; border-bottom: 1px solid #c5cbd5; }
.menu button { padding: 0 8px; }
.tools { height: 23px; flex: none; display: flex; padding: 0 2px; background: #fff; border-bottom: 1px solid #dadada; }
.tools button { width: 23px; height: 22px; }
.tools .on { background: #cce8ff; border: 1px solid #99d1ff; }
.tools hr { width: 1px; height: 18px; margin: 2px 5px 2px 2px; border: 0; background: #9a9a9a; }
.panes { flex: 1; min-height: 0; display: grid; grid-template-columns: 190px 1fr 190px; gap: 3px; padding-top: 6px; }
.pane { min-width: 0; background: #fff; overflow: hidden; }
.tree-pane { display: flex; flex-direction: column; justify-content: space-between; border: 1px solid #828790; }
.sunken { border: 1px solid; border-color: #a0a0a0 #e3e3e3 #e3e3e3 #a0a0a0; box-shadow: inset 1px 1px #696969; padding: 1px; }
.tree { padding: 1px 0 0 3px; overflow: hidden; }
.devices .tree { padding: 0 0 0 2px; }
.tree ul { padding-left: 19px; }
.tree .flat { padding-left: 0; }
.row { display: flex; height: 18px; }
.row button { width: 19px; height: 18px; padding: 1px 2px 0 0; flex: none; }
.leaf { padding-left: 19px; }
.item { display: flex; align-items: center; gap: 5px; padding: 0 3px 0 1px; }
.picked { background: #d9d9d9; }
.focus { background: #cce8ff; }
.hscroll { height: 15px; flex: none; display: flex; align-items: center; gap: 4px; margin: 0 1px 2px; padding: 0 3px; background: #f0f0f0; }
.hscroll-track { flex: 1; }
.hscroll-thumb { width: 96%; height: 15px; background: #cdcdcd; }
.actions h2 { height: 21px; padding-left: 5px; font-weight: bold; line-height: 20px; background: #f0f0f0; border-bottom: 1px solid #a0a0a0; }
.actions button { width: 100%; justify-content: space-between; padding: 0 7px; height: 24px; }
.actions .group { height: 26px; border-top: 1px solid #fff; background: linear-gradient(#b9d1ea, #99b4d1); }
.actions .more { padding-left: 31px; }
.status { height: 23px; flex: none; display: flex; border-top: 1px solid #d7d7d7; padding: 1px 2px; }
.status span { border-right: 1px solid #d7d7d7; width: 85px; }
.status span:first-child { flex: 1; }
.status span:nth-child(2) { width: 133px; }
```
